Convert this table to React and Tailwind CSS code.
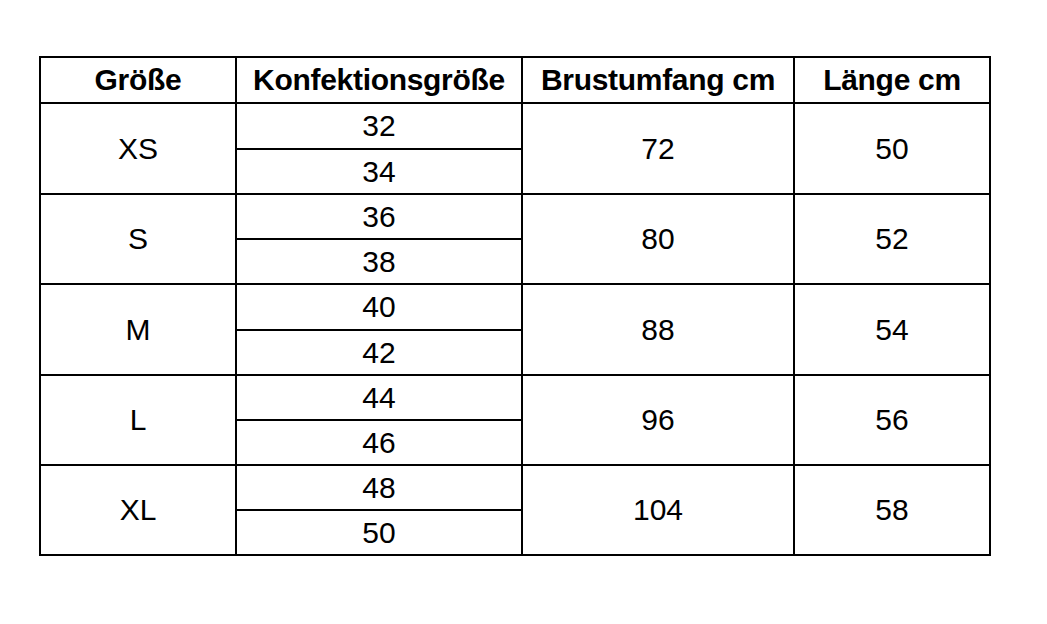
const rows = [
  { size: 'XS', konf: ['32', '34'], brust: '72', laenge: '50', tall: true },
  { size: 'S', konf: ['36', '38'], brust: '80', laenge: '52' },
  { size: 'M', konf: ['40', '42'], brust: '88', laenge: '54', tall: true },
  { size: 'L', konf: ['44', '46'], brust: '96', laenge: '56' },
  { size: 'XL', konf: ['48', '50'], brust: '104', laenge: '58' },
];

const cell = 'border-2 border-black text-center align-middle p-0';

export default function App() {
  return (
    <div className="w-[1047px] h-[624px] bg-white pt-[56px] pl-[39px] font-['Liberation_Sans',Arial,sans-serif] text-black">
      <table className="table-fixed border-collapse w-[952px]">
        <colgroup>
          <col className="w-[196px]" />
          <col className="w-[286px]" />
          <col className="w-[272px]" />
          <col className="w-[196px]" />
        </colgroup>
        <thead>
          <tr className="h-[46px]">
            {['Größe', 'Konfektionsgröße', 'Brustumfang cm', 'Länge cm'].map((h) => (
              <th key={h} className={`${cell} text-[30px] font-bold tracking-[-0.3px] leading-none`}>
                {h}
              </th>
            ))}
          </tr>
        </thead>
        <tbody className="text-[30px] leading-none">
          {rows.map((r) => [
            <tr key={r.size + 'a'} className={r.tall ? 'h-[46px]' : 'h-[45px]'}>
              <td rowSpan={2} className={cell}>{r.size}</td>
              <td className={cell}>{r.konf[0]}</td>
              <td rowSpan={2} className={cell}>{r.brust}</td>
              <td rowSpan={2} className={cell}>{r.laenge}</td>
            </tr>,
            <tr key={r.size + 'b'} className="h-[45px]">
              <td className={cell}>{r.konf[1]}</td>
            </tr>,
          ])}
        </tbody>
      </table>
    </div>
  );
}
